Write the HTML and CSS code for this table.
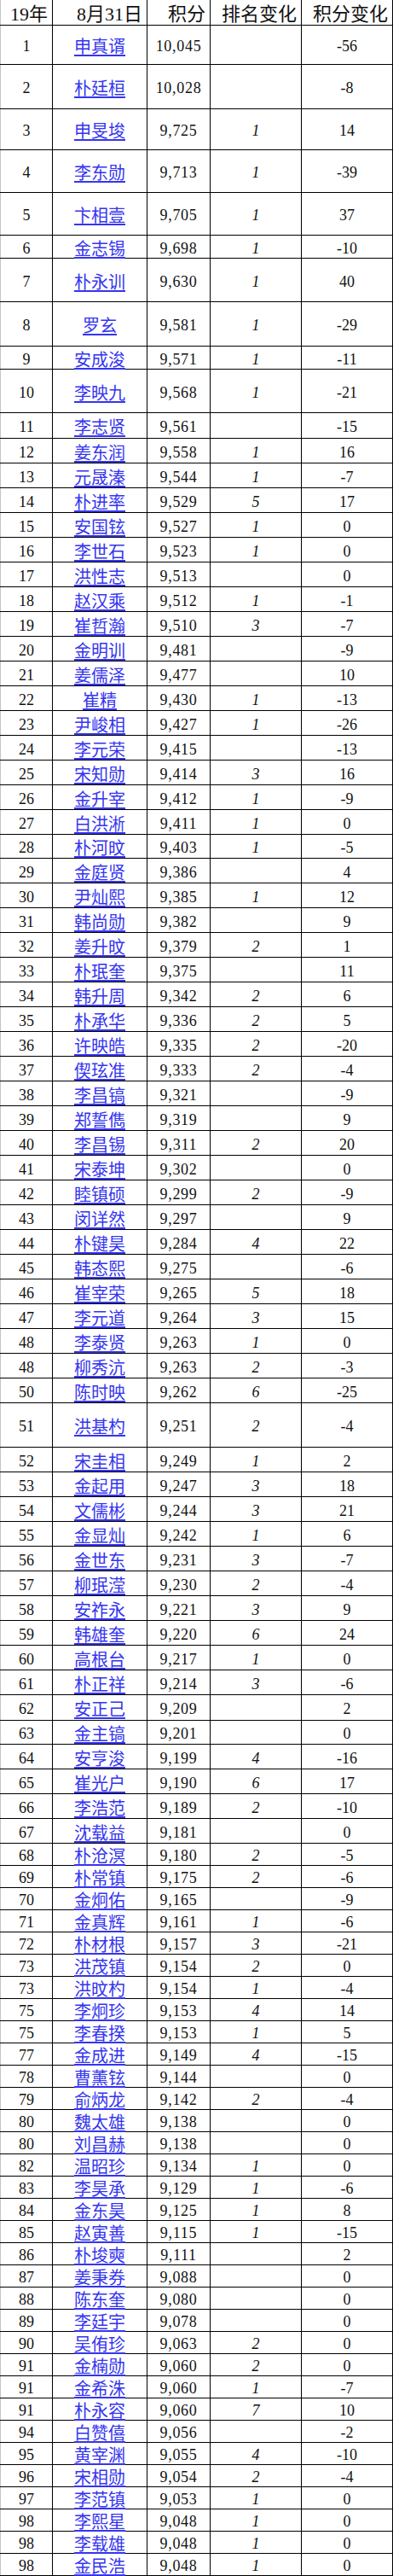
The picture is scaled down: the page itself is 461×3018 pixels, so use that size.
FILE: index.html
```html
<!DOCTYPE html>
<html lang="zh">
<head>
<meta charset="utf-8">
<title>19年8月31日 积分</title>
<link rel="stylesheet" href="styles.css">
</head>
<body>
<div class="sheet">
<div class="row head h30"><div class="cell">19年</div><div class="cell">8月31日</div><div class="cell">积分</div><div class="cell">排名变化</div><div class="cell">积分变化</div></div>
<div class="row h46"><div class="cell rk">1</div><div class="cell nm"><a href="#">申真谞</a></div><div class="cell sc">10,045</div><div class="cell ch"></div><div class="cell df">-56</div></div>
<div class="row h52"><div class="cell rk">2</div><div class="cell nm"><a href="#">朴廷桓</a></div><div class="cell sc">10,028</div><div class="cell ch"></div><div class="cell df">-8</div></div>
<div class="row h48"><div class="cell rk">3</div><div class="cell nm"><a href="#">申旻埈</a></div><div class="cell sc">9,725</div><div class="cell ch">1</div><div class="cell df">14</div></div>
<div class="row h50"><div class="cell rk">4</div><div class="cell nm"><a href="#">李东勋</a></div><div class="cell sc">9,713</div><div class="cell ch">1</div><div class="cell df">-39</div></div>
<div class="row h50"><div class="cell rk">5</div><div class="cell nm"><a href="#">卞相壹</a></div><div class="cell sc">9,705</div><div class="cell ch">1</div><div class="cell df">37</div></div>
<div class="row h27"><div class="cell rk">6</div><div class="cell nm"><a href="#">金志锡</a></div><div class="cell sc">9,698</div><div class="cell ch">1</div><div class="cell df">-10</div></div>
<div class="row h51"><div class="cell rk">7</div><div class="cell nm"><a href="#">朴永训</a></div><div class="cell sc">9,630</div><div class="cell ch">1</div><div class="cell df">40</div></div>
<div class="row h52"><div class="cell rk">8</div><div class="cell nm"><a href="#">罗玄</a></div><div class="cell sc">9,581</div><div class="cell ch">1</div><div class="cell df">-29</div></div>
<div class="row h27"><div class="cell rk">9</div><div class="cell nm"><a href="#">安成浚</a></div><div class="cell sc">9,571</div><div class="cell ch">1</div><div class="cell df">-11</div></div>
<div class="row h51"><div class="cell rk">10</div><div class="cell nm"><a href="#">李映九</a></div><div class="cell sc">9,568</div><div class="cell ch">1</div><div class="cell df">-21</div></div>
<div class="row h30"><div class="cell rk">11</div><div class="cell nm"><a href="#">李志贤</a></div><div class="cell sc">9,561</div><div class="cell ch"></div><div class="cell df">-15</div></div>
<div class="row h29"><div class="cell rk">12</div><div class="cell nm"><a href="#">姜东润</a></div><div class="cell sc">9,558</div><div class="cell ch">1</div><div class="cell df">16</div></div>
<div class="row h29"><div class="cell rk">13</div><div class="cell nm"><a href="#">元晟溱</a></div><div class="cell sc">9,544</div><div class="cell ch">1</div><div class="cell df">-7</div></div>
<div class="row h29"><div class="cell rk">14</div><div class="cell nm"><a href="#">朴进率</a></div><div class="cell sc">9,529</div><div class="cell ch">5</div><div class="cell df">17</div></div>
<div class="row h29"><div class="cell rk">15</div><div class="cell nm"><a href="#">安国铉</a></div><div class="cell sc">9,527</div><div class="cell ch">1</div><div class="cell df">0</div></div>
<div class="row h29"><div class="cell rk">16</div><div class="cell nm"><a href="#">李世石</a></div><div class="cell sc">9,523</div><div class="cell ch">1</div><div class="cell df">0</div></div>
<div class="row h29"><div class="cell rk">17</div><div class="cell nm"><a href="#">洪性志</a></div><div class="cell sc">9,513</div><div class="cell ch"></div><div class="cell df">0</div></div>
<div class="row h29"><div class="cell rk">18</div><div class="cell nm"><a href="#">赵汉乘</a></div><div class="cell sc">9,512</div><div class="cell ch">1</div><div class="cell df">-1</div></div>
<div class="row h29"><div class="cell rk">19</div><div class="cell nm"><a href="#">崔哲瀚</a></div><div class="cell sc">9,510</div><div class="cell ch">3</div><div class="cell df">-7</div></div>
<div class="row h29"><div class="cell rk">20</div><div class="cell nm"><a href="#">金明训</a></div><div class="cell sc">9,481</div><div class="cell ch"></div><div class="cell df">-9</div></div>
<div class="row h29"><div class="cell rk">21</div><div class="cell nm"><a href="#">姜儒泽</a></div><div class="cell sc">9,477</div><div class="cell ch"></div><div class="cell df">10</div></div>
<div class="row h29"><div class="cell rk">22</div><div class="cell nm"><a href="#">崔精</a></div><div class="cell sc">9,430</div><div class="cell ch">1</div><div class="cell df">-13</div></div>
<div class="row h29"><div class="cell rk">23</div><div class="cell nm"><a href="#">尹峻相</a></div><div class="cell sc">9,427</div><div class="cell ch">1</div><div class="cell df">-26</div></div>
<div class="row h29"><div class="cell rk">24</div><div class="cell nm"><a href="#">李元荣</a></div><div class="cell sc">9,415</div><div class="cell ch"></div><div class="cell df">-13</div></div>
<div class="row h29"><div class="cell rk">25</div><div class="cell nm"><a href="#">宋知勋</a></div><div class="cell sc">9,414</div><div class="cell ch">3</div><div class="cell df">16</div></div>
<div class="row h29"><div class="cell rk">26</div><div class="cell nm"><a href="#">金升宰</a></div><div class="cell sc">9,412</div><div class="cell ch">1</div><div class="cell df">-9</div></div>
<div class="row h29"><div class="cell rk">27</div><div class="cell nm"><a href="#">白洪淅</a></div><div class="cell sc">9,411</div><div class="cell ch">1</div><div class="cell df">0</div></div>
<div class="row h28"><div class="cell rk">28</div><div class="cell nm"><a href="#">朴河旼</a></div><div class="cell sc">9,403</div><div class="cell ch">1</div><div class="cell df">-5</div></div>
<div class="row h29"><div class="cell rk">29</div><div class="cell nm"><a href="#">金庭贤</a></div><div class="cell sc">9,386</div><div class="cell ch"></div><div class="cell df">4</div></div>
<div class="row h29"><div class="cell rk">30</div><div class="cell nm"><a href="#">尹灿熙</a></div><div class="cell sc">9,385</div><div class="cell ch">1</div><div class="cell df">12</div></div>
<div class="row h29"><div class="cell rk">31</div><div class="cell nm"><a href="#">韩尚勋</a></div><div class="cell sc">9,382</div><div class="cell ch"></div><div class="cell df">9</div></div>
<div class="row h29"><div class="cell rk">32</div><div class="cell nm"><a href="#">姜升旼</a></div><div class="cell sc">9,379</div><div class="cell ch">2</div><div class="cell df">1</div></div>
<div class="row h29"><div class="cell rk">33</div><div class="cell nm"><a href="#">朴珉奎</a></div><div class="cell sc">9,375</div><div class="cell ch"></div><div class="cell df">11</div></div>
<div class="row h29"><div class="cell rk">34</div><div class="cell nm"><a href="#">韩升周</a></div><div class="cell sc">9,342</div><div class="cell ch">2</div><div class="cell df">6</div></div>
<div class="row h29"><div class="cell rk">35</div><div class="cell nm"><a href="#">朴承华</a></div><div class="cell sc">9,336</div><div class="cell ch">2</div><div class="cell df">5</div></div>
<div class="row h29"><div class="cell rk">36</div><div class="cell nm"><a href="#">许映皓</a></div><div class="cell sc">9,335</div><div class="cell ch">2</div><div class="cell df">-20</div></div>
<div class="row h29"><div class="cell rk">37</div><div class="cell nm"><a href="#">偰玹准</a></div><div class="cell sc">9,333</div><div class="cell ch">2</div><div class="cell df">-4</div></div>
<div class="row h29"><div class="cell rk">38</div><div class="cell nm"><a href="#">李昌镐</a></div><div class="cell sc">9,321</div><div class="cell ch"></div><div class="cell df">-9</div></div>
<div class="row h29"><div class="cell rk">39</div><div class="cell nm"><a href="#">郑誓儁</a></div><div class="cell sc">9,319</div><div class="cell ch"></div><div class="cell df">9</div></div>
<div class="row h29"><div class="cell rk">40</div><div class="cell nm"><a href="#">李昌锡</a></div><div class="cell sc">9,311</div><div class="cell ch">2</div><div class="cell df">20</div></div>
<div class="row h29"><div class="cell rk">41</div><div class="cell nm"><a href="#">宋泰坤</a></div><div class="cell sc">9,302</div><div class="cell ch"></div><div class="cell df">0</div></div>
<div class="row h29"><div class="cell rk">42</div><div class="cell nm"><a href="#">睦镇硕</a></div><div class="cell sc">9,299</div><div class="cell ch">2</div><div class="cell df">-9</div></div>
<div class="row h29"><div class="cell rk">43</div><div class="cell nm"><a href="#">闵详然</a></div><div class="cell sc">9,297</div><div class="cell ch"></div><div class="cell df">9</div></div>
<div class="row h29"><div class="cell rk">44</div><div class="cell nm"><a href="#">朴键昊</a></div><div class="cell sc">9,284</div><div class="cell ch">4</div><div class="cell df">22</div></div>
<div class="row h29"><div class="cell rk">45</div><div class="cell nm"><a href="#">韩态熙</a></div><div class="cell sc">9,275</div><div class="cell ch"></div><div class="cell df">-6</div></div>
<div class="row h29"><div class="cell rk">46</div><div class="cell nm"><a href="#">崔宰荣</a></div><div class="cell sc">9,265</div><div class="cell ch">5</div><div class="cell df">18</div></div>
<div class="row h29"><div class="cell rk">47</div><div class="cell nm"><a href="#">李元道</a></div><div class="cell sc">9,264</div><div class="cell ch">3</div><div class="cell df">15</div></div>
<div class="row h29"><div class="cell rk">48</div><div class="cell nm"><a href="#">李泰贤</a></div><div class="cell sc">9,263</div><div class="cell ch">1</div><div class="cell df">0</div></div>
<div class="row h29"><div class="cell rk">48</div><div class="cell nm"><a href="#">柳秀沆</a></div><div class="cell sc">9,263</div><div class="cell ch">2</div><div class="cell df">-3</div></div>
<div class="row h29"><div class="cell rk">50</div><div class="cell nm"><a href="#">陈时映</a></div><div class="cell sc">9,262</div><div class="cell ch">6</div><div class="cell df">-25</div></div>
<div class="row h52"><div class="cell rk">51</div><div class="cell nm"><a href="#">洪基杓</a></div><div class="cell sc">9,251</div><div class="cell ch">2</div><div class="cell df">-4</div></div>
<div class="row h29"><div class="cell rk">52</div><div class="cell nm"><a href="#">宋圭相</a></div><div class="cell sc">9,249</div><div class="cell ch">1</div><div class="cell df">2</div></div>
<div class="row h29"><div class="cell rk">53</div><div class="cell nm"><a href="#">金起用</a></div><div class="cell sc">9,247</div><div class="cell ch">3</div><div class="cell df">18</div></div>
<div class="row h29"><div class="cell rk">54</div><div class="cell nm"><a href="#">文儒彬</a></div><div class="cell sc">9,244</div><div class="cell ch">3</div><div class="cell df">21</div></div>
<div class="row h29"><div class="cell rk">55</div><div class="cell nm"><a href="#">金显灿</a></div><div class="cell sc">9,242</div><div class="cell ch">1</div><div class="cell df">6</div></div>
<div class="row h29"><div class="cell rk">56</div><div class="cell nm"><a href="#">金世东</a></div><div class="cell sc">9,231</div><div class="cell ch">3</div><div class="cell df">-7</div></div>
<div class="row h29"><div class="cell rk">57</div><div class="cell nm"><a href="#">柳珉滢</a></div><div class="cell sc">9,230</div><div class="cell ch">2</div><div class="cell df">-4</div></div>
<div class="row h29"><div class="cell rk">58</div><div class="cell nm"><a href="#">安祚永</a></div><div class="cell sc">9,221</div><div class="cell ch">3</div><div class="cell df">9</div></div>
<div class="row h29"><div class="cell rk">59</div><div class="cell nm"><a href="#">韩雄奎</a></div><div class="cell sc">9,220</div><div class="cell ch">6</div><div class="cell df">24</div></div>
<div class="row h29"><div class="cell rk">60</div><div class="cell nm"><a href="#">高根台</a></div><div class="cell sc">9,217</div><div class="cell ch">1</div><div class="cell df">0</div></div>
<div class="row h29"><div class="cell rk">61</div><div class="cell nm"><a href="#">朴正祥</a></div><div class="cell sc">9,214</div><div class="cell ch">3</div><div class="cell df">-6</div></div>
<div class="row h30"><div class="cell rk">62</div><div class="cell nm"><a href="#">安正己</a></div><div class="cell sc">9,209</div><div class="cell ch"></div><div class="cell df">2</div></div>
<div class="row h28"><div class="cell rk">63</div><div class="cell nm"><a href="#">金主镐</a></div><div class="cell sc">9,201</div><div class="cell ch"></div><div class="cell df">0</div></div>
<div class="row h29"><div class="cell rk">64</div><div class="cell nm"><a href="#">安亨浚</a></div><div class="cell sc">9,199</div><div class="cell ch">4</div><div class="cell df">-16</div></div>
<div class="row h29"><div class="cell rk">65</div><div class="cell nm"><a href="#">崔光户</a></div><div class="cell sc">9,190</div><div class="cell ch">6</div><div class="cell df">17</div></div>
<div class="row h29"><div class="cell rk">66</div><div class="cell nm"><a href="#">李浩范</a></div><div class="cell sc">9,189</div><div class="cell ch">2</div><div class="cell df">-10</div></div>
<div class="row h29"><div class="cell rk">67</div><div class="cell nm"><a href="#">沈载益</a></div><div class="cell sc">9,181</div><div class="cell ch"></div><div class="cell df">0</div></div>
<div class="row h26"><div class="cell rk">68</div><div class="cell nm"><a href="#">朴沧溟</a></div><div class="cell sc">9,180</div><div class="cell ch">2</div><div class="cell df">-5</div></div>
<div class="row h26"><div class="cell rk">69</div><div class="cell nm"><a href="#">朴常镇</a></div><div class="cell sc">9,175</div><div class="cell ch">2</div><div class="cell df">-6</div></div>
<div class="row h26"><div class="cell rk">70</div><div class="cell nm"><a href="#">金炯佑</a></div><div class="cell sc">9,165</div><div class="cell ch"></div><div class="cell df">-9</div></div>
<div class="row h26"><div class="cell rk">71</div><div class="cell nm"><a href="#">金真辉</a></div><div class="cell sc">9,161</div><div class="cell ch">1</div><div class="cell df">-6</div></div>
<div class="row h26"><div class="cell rk">72</div><div class="cell nm"><a href="#">朴材根</a></div><div class="cell sc">9,157</div><div class="cell ch">3</div><div class="cell df">-21</div></div>
<div class="row h26"><div class="cell rk">73</div><div class="cell nm"><a href="#">洪茂镇</a></div><div class="cell sc">9,154</div><div class="cell ch">2</div><div class="cell df">0</div></div>
<div class="row h26"><div class="cell rk">73</div><div class="cell nm"><a href="#">洪旼杓</a></div><div class="cell sc">9,154</div><div class="cell ch">1</div><div class="cell df">-4</div></div>
<div class="row h26"><div class="cell rk">75</div><div class="cell nm"><a href="#">李炯珍</a></div><div class="cell sc">9,153</div><div class="cell ch">4</div><div class="cell df">14</div></div>
<div class="row h26"><div class="cell rk">75</div><div class="cell nm"><a href="#">李春揆</a></div><div class="cell sc">9,153</div><div class="cell ch">1</div><div class="cell df">5</div></div>
<div class="row h26"><div class="cell rk">77</div><div class="cell nm"><a href="#">金成进</a></div><div class="cell sc">9,149</div><div class="cell ch">4</div><div class="cell df">-15</div></div>
<div class="row h26"><div class="cell rk">78</div><div class="cell nm"><a href="#">曹薰铉</a></div><div class="cell sc">9,144</div><div class="cell ch"></div><div class="cell df">0</div></div>
<div class="row h26"><div class="cell rk">79</div><div class="cell nm"><a href="#">俞炳龙</a></div><div class="cell sc">9,142</div><div class="cell ch">2</div><div class="cell df">-4</div></div>
<div class="row h26"><div class="cell rk">80</div><div class="cell nm"><a href="#">魏太雄</a></div><div class="cell sc">9,138</div><div class="cell ch"></div><div class="cell df">0</div></div>
<div class="row h26"><div class="cell rk">80</div><div class="cell nm"><a href="#">刘昌赫</a></div><div class="cell sc">9,138</div><div class="cell ch"></div><div class="cell df">0</div></div>
<div class="row h26"><div class="cell rk">82</div><div class="cell nm"><a href="#">温昭珍</a></div><div class="cell sc">9,134</div><div class="cell ch">1</div><div class="cell df">0</div></div>
<div class="row h26"><div class="cell rk">83</div><div class="cell nm"><a href="#">李昊承</a></div><div class="cell sc">9,129</div><div class="cell ch">1</div><div class="cell df">-6</div></div>
<div class="row h26"><div class="cell rk">84</div><div class="cell nm"><a href="#">金东昊</a></div><div class="cell sc">9,125</div><div class="cell ch">1</div><div class="cell df">8</div></div>
<div class="row h26"><div class="cell rk">85</div><div class="cell nm"><a href="#">赵寅善</a></div><div class="cell sc">9,115</div><div class="cell ch">1</div><div class="cell df">-15</div></div>
<div class="row h26"><div class="cell rk">86</div><div class="cell nm"><a href="#">朴埈奭</a></div><div class="cell sc">9,111</div><div class="cell ch"></div><div class="cell df">2</div></div>
<div class="row h26"><div class="cell rk">87</div><div class="cell nm"><a href="#">姜秉券</a></div><div class="cell sc">9,088</div><div class="cell ch"></div><div class="cell df">0</div></div>
<div class="row h26"><div class="cell rk">88</div><div class="cell nm"><a href="#">陈东奎</a></div><div class="cell sc">9,080</div><div class="cell ch"></div><div class="cell df">0</div></div>
<div class="row h26"><div class="cell rk">89</div><div class="cell nm"><a href="#">李廷宇</a></div><div class="cell sc">9,078</div><div class="cell ch"></div><div class="cell df">0</div></div>
<div class="row h26"><div class="cell rk">90</div><div class="cell nm"><a href="#">吴侑珍</a></div><div class="cell sc">9,063</div><div class="cell ch">2</div><div class="cell df">0</div></div>
<div class="row h26"><div class="cell rk">91</div><div class="cell nm"><a href="#">金楠勋</a></div><div class="cell sc">9,060</div><div class="cell ch">2</div><div class="cell df">0</div></div>
<div class="row h26"><div class="cell rk">91</div><div class="cell nm"><a href="#">金希洙</a></div><div class="cell sc">9,060</div><div class="cell ch">1</div><div class="cell df">-7</div></div>
<div class="row h26"><div class="cell rk">91</div><div class="cell nm"><a href="#">朴永容</a></div><div class="cell sc">9,060</div><div class="cell ch">7</div><div class="cell df">10</div></div>
<div class="row h26"><div class="cell rk">94</div><div class="cell nm"><a href="#">白赞僖</a></div><div class="cell sc">9,056</div><div class="cell ch"></div><div class="cell df">-2</div></div>
<div class="row h26"><div class="cell rk">95</div><div class="cell nm"><a href="#">黄宰渊</a></div><div class="cell sc">9,055</div><div class="cell ch">4</div><div class="cell df">-10</div></div>
<div class="row h26"><div class="cell rk">96</div><div class="cell nm"><a href="#">宋相勋</a></div><div class="cell sc">9,054</div><div class="cell ch">2</div><div class="cell df">-4</div></div>
<div class="row h26"><div class="cell rk">97</div><div class="cell nm"><a href="#">李范镇</a></div><div class="cell sc">9,053</div><div class="cell ch">1</div><div class="cell df">0</div></div>
<div class="row h26"><div class="cell rk">98</div><div class="cell nm"><a href="#">李熙星</a></div><div class="cell sc">9,048</div><div class="cell ch">1</div><div class="cell df">0</div></div>
<div class="row h26"><div class="cell rk">98</div><div class="cell nm"><a href="#">李载雄</a></div><div class="cell sc">9,048</div><div class="cell ch">1</div><div class="cell df">0</div></div>
<div class="row h26"><div class="cell rk">98</div><div class="cell nm"><a href="#">金民浩</a></div><div class="cell sc">9,048</div><div class="cell ch">1</div><div class="cell df">0</div></div>
</div>
</body>
</html>
```
FILE: styles.css
```css
html, body {
  margin: 0;
  padding: 0;
  background: #ffffff;
}

.sheet {
  width: 461px;
  font-family: "Liberation Serif", "Noto Sans CJK SC", serif;
  color: #111111;
}

.row {
  display: grid;
  grid-template-columns: 62px 111px 74px 107px 107px;
  box-sizing: border-box;
  border-bottom: 1px solid #000000;
}

.h26 { height: 26px; }
.h27 { height: 27px; }
.h28 { height: 28px; }
.h29 { height: 29px; }
.h30 { height: 30px; }
.h46 { height: 46px; }
.h48 { height: 48px; }
.h50 { height: 50px; }
.h51 { height: 51px; }
.h52 { height: 52px; }

.cell {
  box-sizing: border-box;
  border-right: 1px solid #000000;
  display: flex;
  align-items: center;
  justify-content: center;
  padding-top: 3px;
  font-size: 18px;
  line-height: 18px;
  white-space: nowrap;
  min-width: 0;
}

.cell:first-child {
  border-left: 1px solid #c4c4c4;
}

.head .cell {
  justify-content: flex-end;
  padding-right: 5px;
  padding-top: 4px;
  font-size: 22px;
  line-height: 22px;
}

.sc {
  letter-spacing: 0.7px;
}

.nm a {
  font-family: "Noto Sans CJK SC", sans-serif;
  font-size: 20px;
  line-height: 20px;
  color: #3535f0;
  text-decoration: underline;
  text-underline-offset: 2px;
}

.ch {
  font-style: italic;
}
```
